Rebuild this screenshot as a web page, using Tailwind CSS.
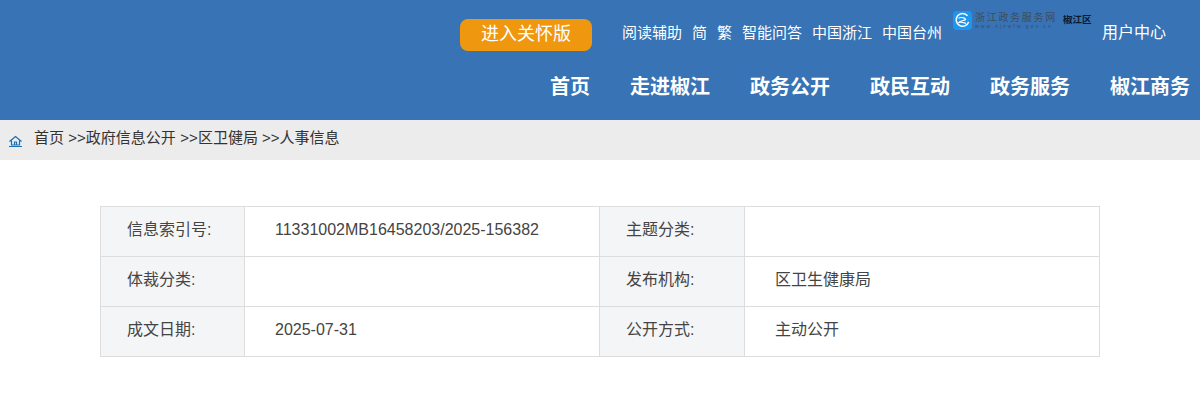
<!DOCTYPE html>
<html lang="zh-CN">
<head>
<meta charset="utf-8">
<script src="https://cdn.jsdelivr.net/npm/@tailwindcss/browser@4"></script>
</head>
<body class="bg-white font-['Liberation_Sans','Noto_Sans_CJK_SC',sans-serif]">
<header class="h-[120px] bg-[#3773b5] text-white">
  <div class="flex h-[66px] items-start justify-end pr-[34px]">
    <a class="mt-[19px] flex h-8 w-[132px] items-center justify-center rounded-lg bg-[#ef970e] pb-[2px] text-lg">进入关怀版</a>
    <nav class="ml-[30px] mt-6 flex gap-[10px] text-[15px] leading-[18px] text-white">
      <a>阅读辅助</a><a>简</a><a>繁</a><a>智能问答</a><a>中国浙江</a><a>中国台州</a>
    </nav>
    <div class="ml-[10px] mt-[10px] flex h-5 w-[140px] items-center">
      <svg width="19" height="19" viewBox="0 0 19 19" class="ml-px shrink-0"><rect width="19" height="19" rx="4" fill="#1e96ee"/><path d="M14.5 4.8A6.4 6.4 0 1 0 15.6 11" fill="none" stroke="#fff" stroke-width="1.5"/><path d="M5.5 7.2C8 5.8 12 6.6 12.6 8.6C10.5 10 7.5 9.6 6 11.4C8.5 10.8 11 11.8 13 12.4" fill="none" stroke="#fff" stroke-width="1.2"/></svg>
      <div class="ml-[3px] flex w-[82px] flex-col overflow-hidden leading-none text-[#414c5c]">
        <span class="text-[10px] leading-[11px] tracking-[1.7px] whitespace-nowrap font-['Liberation_Serif','Noto_Sans_CJK_SC',serif]">浙江政务服务网</span>
        <span class="text-[5px] leading-[6px] tracking-[2.1px] whitespace-nowrap">www.zjzwfw.gov.cn</span>
      </div>
      <span class="ml-[6px] text-[9.5px] font-bold whitespace-nowrap text-[#0b1a33]">椒江区</span>
    </div>
    <a class="ml-[10px] mt-6 text-base leading-[18px] text-white">用户中心</a>
  </div>
  <nav class="flex justify-end gap-10 pr-[10px] text-xl font-bold leading-[42px]">
    <a>首页</a><a>走进椒江</a><a>政务公开</a><a>政民互动</a><a>政务服务</a><a>椒江商务</a>
  </nav>
</header>
<div class="flex h-10 items-center bg-[#ececec] pb-1 pl-[9px] text-[15px] text-[#333]">
  <svg width="13" height="13" viewBox="0 0 13 13" class="mt-[6px]" fill="none" stroke="#1d6fb0" stroke-width="1.2"><path d="M0.5 6.5L6.5 1.5L12.5 6.5M2.5 5.5V10H10.5V5.5M5.5 10V7H7.5V10M0 11.5H13"/></svg>
  <span class="ml-3">首页 &gt;&gt;政府信息公开 <span class="ml-[0.5px]">&gt;&gt;区卫健局 &gt;&gt;人事信息</span></span>
</div>
<main class="px-[100px] pt-[46px]">
  <table class="w-[999px] table-fixed border-collapse text-base text-[#444]">
    <colgroup><col class="w-[144px]"><col class="w-[355px]"><col class="w-[145px]"><col class="w-[355px]"></colgroup>
    <tbody>
      <tr class="h-[50px]">
        <td class="border border-[#ddd] bg-[#f4f5f7] pb-1 pl-[26px]">信息索引号:</td>
        <td class="border border-[#ddd] pb-1 pl-[30px]">11331002MB16458203/2025-156382</td>
        <td class="border border-[#ddd] bg-[#f4f5f7] pb-1 pl-[26px]">主题分类:</td>
        <td class="border border-[#ddd] pb-1 pl-[30px]"></td>
      </tr>
      <tr class="h-[50px]">
        <td class="border border-[#ddd] bg-[#f4f5f7] pb-1 pl-[26px]">体裁分类:</td>
        <td class="border border-[#ddd] pb-1 pl-[30px]"></td>
        <td class="border border-[#ddd] bg-[#f4f5f7] pb-1 pl-[26px]">发布机构:</td>
        <td class="border border-[#ddd] pb-1 pl-[30px]">区卫生健康局</td>
      </tr>
      <tr class="h-[50px]">
        <td class="border border-[#ddd] bg-[#f4f5f7] pb-1 pl-[26px]">成文日期:</td>
        <td class="border border-[#ddd] pb-1 pl-[30px]">2025-07-31</td>
        <td class="border border-[#ddd] bg-[#f4f5f7] pb-1 pl-[26px]">公开方式:</td>
        <td class="border border-[#ddd] pb-1 pl-[30px]">主动公开</td>
      </tr>
    </tbody>
  </table>
</main>
</body>
</html>
